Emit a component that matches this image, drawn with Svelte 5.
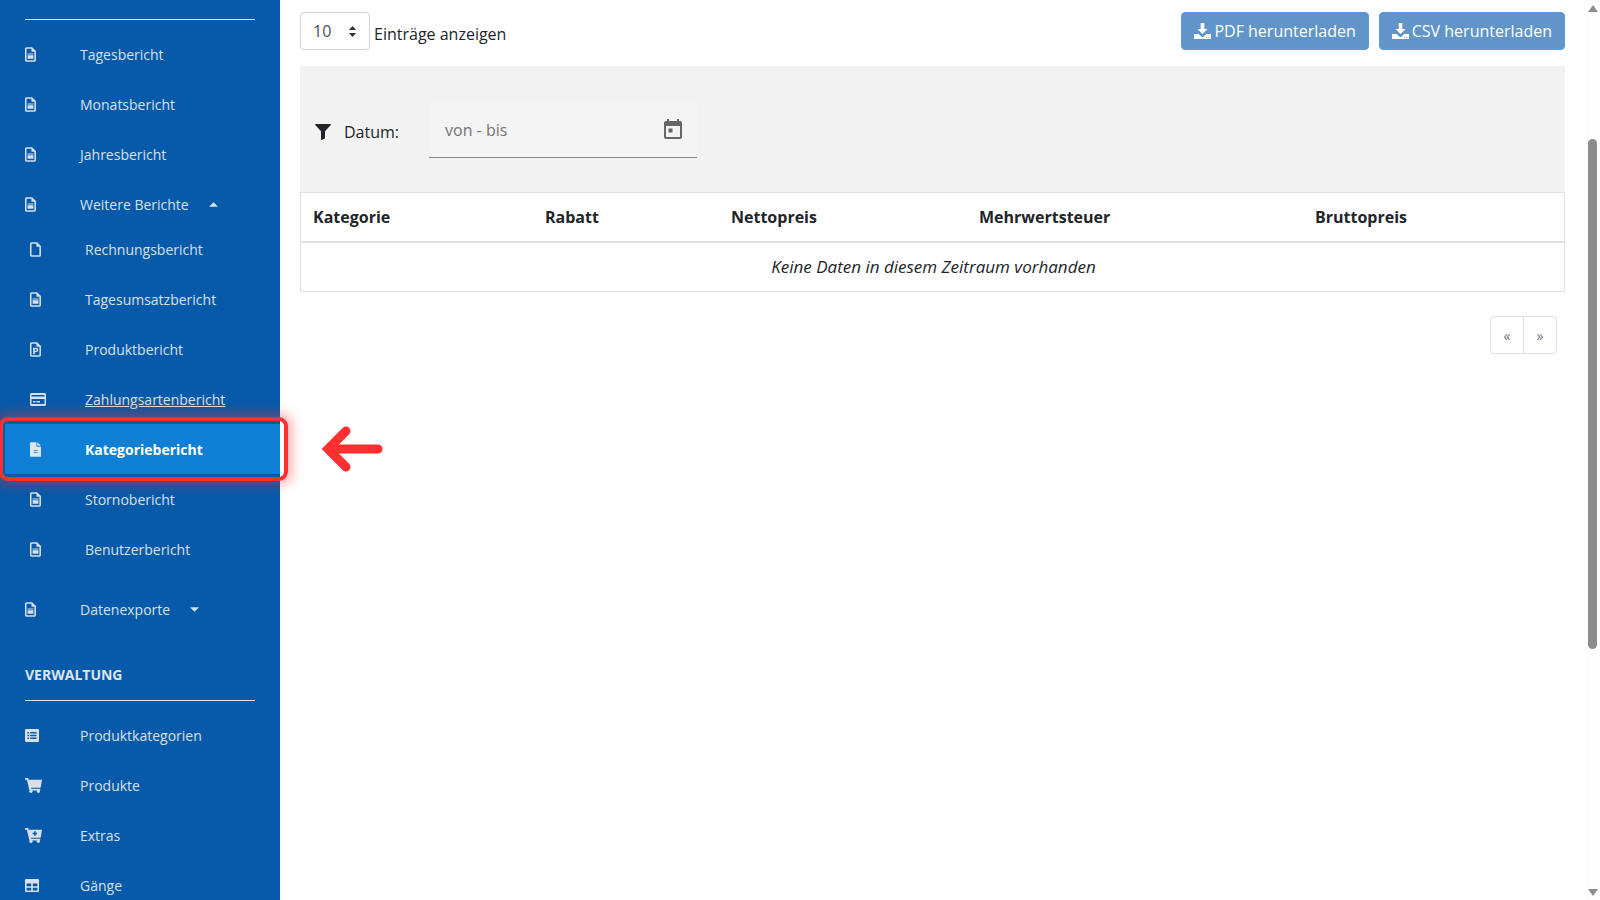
<script>
	const docPath = 'M1.5 0.9H7.4L11.1 4.6V14.4a.7.7 0 0 1-.7.7H1.5a.7.7 0 0 1-.7-.7V1.600a.7.7 0 0 1 .7-.7z';

	const top = [
		{ label: 'Tagesbericht', icon: 'doc' },
		{ label: 'Monatsbericht', icon: 'doc' },
		{ label: 'Jahresbericht', icon: 'doc' }
	];

	const sub = [
		{ label: 'Rechnungsbericht', icon: 'blank' },
		{ label: 'Tagesumsatzbericht', icon: 'doc' },
		{ label: 'Produktbericht', icon: 'p' },
		{ label: 'Zahlungsartenbericht', icon: 'card', underline: true },
		{ label: 'Kategoriebericht', icon: 'solid', active: true },
		{ label: 'Stornobericht', icon: 'doc' },
		{ label: 'Benutzerbericht', icon: 'doc' }
	];

	const admin = [
		{ label: 'Produktkategorien', icon: 'list' },
		{ label: 'Produkte', icon: 'cart' },
		{ label: 'Extras', icon: 'cartplus' },
		{ label: 'Gänge', icon: 'table' }
	];

	const columns = ['Kategorie', 'Rabatt', 'Nettopreis', 'Mehrwertsteuer', 'Bruttopreis'];
</script>

{#snippet icon(name)}
	{#if name === 'card'}
		<svg class="ico" width="16" height="13" viewBox="0 0 16 13">
			<path fill="currentColor" fill-rule="evenodd" d="M1.5 0h13A1.5 1.5 0 0 1 16 1.5v10a1.5 1.5 0 0 1-1.5 1.5h-13A1.5 1.5 0 0 1 0 11.5v-10A1.5 1.5 0 0 1 1.5 0zM1.500 2v1.500h13V2zM1.500 6v5h13V6zM3 8h2.500v1.500H3zM6.500 8H10v1.500H6.500z" />
		</svg>
	{:else if name === 'list'}
		<svg class="ico" width="14" height="13" viewBox="0 0 14 13">
			<path fill="currentColor" fill-rule="evenodd" d="M1.2 0h11.6A1.2 1.2 0 0 1 14 1.2v10.6a1.2 1.2 0 0 1-1.2 1.2H1.2A1.2 1.2 0 0 1 0 11.800V1.2A1.2 1.2 0 0 1 1.2 0zM2.500 3v1.600h1.600V3zM5.200 3v1.600h6.300V3zM2.500 5.700v1.600h1.600V5.700zM5.200 5.700v1.600h6.300V5.700zM2.500 8.400V10h1.600V8.400zM5.200 8.400V10h6.300V8.400z" />
		</svg>
	{:else if name === 'table'}
		<svg class="ico" width="14" height="13" viewBox="0 0 14 13">
			<path fill="currentColor" fill-rule="evenodd" d="M1.2 0h11.6A1.2 1.2 0 0 1 14 1.2v10.6a1.2 1.2 0 0 1-1.2 1.2H1.2A1.2 1.2 0 0 1 0 11.800V1.2A1.2 1.2 0 0 1 1.2 0zM1.600 4.500v2.800h4.600V4.500zM7.800 4.500v2.800h4.600V4.500zM1.600 8.700v2.700h4.600V8.700zM7.800 8.700v2.700h4.600V8.700z" />
		</svg>
	{:else if name === 'cart' || name === 'cartplus'}
		<svg class="ico" width="17" height="15" viewBox="0 0 16 14">
			<path fill="currentColor" d="M0 0h3l.4 1.500H16l-1.300 7.500H5.600l.2 1h8.500v1.600H4.200L1.800 1.500H0z" />
			<circle cx="5.600" cy="12.500" r="1.500" fill="currentColor" />
			<circle cx="12.600" cy="12.500" r="1.500" fill="currentColor" />
			{#if name === 'cartplus'}
				<path fill="#065aa9" d="M8.600 3h1.400v1.400h1.400v1.400H10v1.400H8.600V5.800H7.200V4.400h1.400z" />
			{/if}
		</svg>
	{:else if name === 'solid'}
		<svg class="ico" width="11" height="15" viewBox="0 0 12 16">
			<path fill="currentColor" fill-rule="evenodd" d="M1 0H7V4.500a.5.5 0 0 0 .5.5H12V15a1 1 0 0 1-1 1H1a1 1 0 0 1-1-1V1a1 1 0 0 1 1-1zM8 0l4 4H8zM4 8.500v.8h4.500v-.8zM4 10.800v.8h4.500v-.8z" />
		</svg>
	{:else}
		<svg class="ico" width="11" height="15" viewBox="0 0 12 16">
			<path fill="none" stroke="currentColor" stroke-width="1.700" d={docPath} />
			<path fill="currentColor" d="M7 .7V5h4.300z" />
			{#if name === 'doc'}
				<path fill="currentColor" d="M2.800 7h6.400v.9H2.800zM2.800 8.800h6.400v3.800H2.800z" />
			{:else if name === 'p'}
				<path fill="currentColor" fill-rule="evenodd" d="M3.400 6.200h3.300a2.200 2.200 0 0 1 0 4.700H5.200v2.200H3.400zM5.200 7.700v1.800h1.300a.9.9 0 0 0 0-1.800z" />
			{/if}
		</svg>
	{/if}
{/snippet}

{#snippet caret(up)}
	<svg class="caret" width="9" height="5" viewBox="0 0 10 5">
		<path fill="currentColor" d={up ? 'M5 0l5 5H0z' : 'M0 0h10L5 5z'} />
	</svg>
{/snippet}

{#snippet download()}
	<svg width="17" height="16" viewBox="0 0 17 16">
		<path fill="#fff" d="M6.700 0h3.600v6h3.200L8.500 11 3.500 6h3.200z" />
		<path fill="#fff" fill-rule="evenodd" d="M0 11h4.800l2.200 2.200a2 2 0 0 0 3 0L12.200 11H17v5H0zM12 14v.8h1.200V14zM14.200 14v.8h1.200V14z" />
	</svg>
{/snippet}

<div class="page">
	<aside class="sidebar">
		<hr class="rule" />
		{#each top as item}
			<div class="item"><span class="slot">{@render icon(item.icon)}</span>{item.label}</div>
		{/each}
		<div class="item"><span class="slot">{@render icon('doc')}</span>Weitere Berichte{@render caret(true)}</div>

		<div class="submenu">
			{#each sub as item}
				<div class="item sub" class:active={item.active}>
					<span class="slot">{@render icon(item.icon)}</span>
					<span class:underline={item.underline}>{item.label}</span>
					{#if item.active}
						<span class="frame"></span>
						<svg class="arrow" width="62" height="48" viewBox="0 0 62 48">
							<path fill="none" stroke="#ff3030" stroke-width="9" stroke-linecap="round" stroke-linejoin="miter" d="M57 24H7M25 6L7 24l18 18" />
						</svg>
					{/if}
				</div>
			{/each}
		</div>

		<div class="item export"><span class="slot">{@render icon('doc')}</span>Datenexporte{@render caret(false)}</div>

		<h3 class="heading">VERWALTUNG</h3>
		<hr class="rule lower" />
		{#each admin as item}
			<div class="item"><span class="slot">{@render icon(item.icon)}</span>{item.label}</div>
		{/each}
	</aside>

	<main class="content">
		<div class="toolbar">
			<div class="length">
				<div class="select">
					<span>10</span>
					<svg width="9" height="11" viewBox="0 0 8 11"><path fill="#333" d="M4 0l3.600 4H.4zM4 11L.4 7h7.200z" /></svg>
				</div>
				<span class="length-label">Einträge anzeigen</span>
			</div>
			<div class="actions">
				<button class="btn pdf">{@render download()}PDF herunterladen</button>
				<button class="btn">{@render download()}CSV herunterladen</button>
			</div>
		</div>

		<div class="filter">
			<svg width="16" height="16" viewBox="0 0 16 16">
				<path fill="#212529" d="M.6 0h14.800a.6.6 0 0 1 .4 1L10 7.200V14a.6.6 0 0 1-.3.5l-3 1.400a.5.5 0 0 1-.7-.5V7.200L.2 1A.6.6 0 0 1 .6 0z" />
			</svg>
			<span class="filter-label">Datum:</span>
			<div class="date">
				<span>von - bis</span>
				<svg class="calendar" width="18" height="20" viewBox="0 0 18 20">
					<path fill="#666" fill-rule="evenodd" d="M3 0h2v2h8V0h2v2h1a2 2 0 0 1 2 2v14a2 2 0 0 1-2 2H2a2 2 0 0 1-2-2V4a2 2 0 0 1 2-2h1zM2 7v11h14V7zM4.500 9.500h4v4h-4z" />
				</svg>
			</div>
		</div>

		<div class="table">
			<div class="thead">
				{#each columns as col}
					<div class="th">{col}</div>
				{/each}
			</div>
			<div class="empty">Keine Daten in diesem Zeitraum vorhanden</div>
		</div>

		<div class="pager">
			<span class="page-btn">«</span>
			<span class="page-btn">»</span>
		</div>
	</main>

	<div class="scrollbar">
		<span class="tri up"></span>
		<span class="thumb"></span>
		<span class="tri down"></span>
	</div>
</div>

<style>
	:global(body) {
		margin: 0;
		overflow: hidden;
		background: #fff;
	}

	.page {
		display: flex;
		height: 900px;
		overflow: hidden;
		font-family: 'Open Sans', sans-serif;
		color: #212529;
	}

	.sidebar {
		width: 280px;
		flex: none;
		box-sizing: border-box;
		padding-top: 19px;
		background: #065aa9;
		color: #d9e0e8;
		font-size: 14px;
	}

	.rule {
		margin: 0 25px 9px;
		height: 1px;
		border: 0;
		background: #dfe6ee;
	}

	.item {
		position: relative;
		display: flex;
		align-items: center;
		height: 50px;
		padding-left: 25px;
	}

	.slot {
		display: flex;
		width: 55px;
		flex: none;
	}

	.caret {
		margin-left: 20px;
	}

	.submenu {
		margin-top: -5px;
	}

	.sub {
		padding-left: 30px;
	}

	.underline {
		text-decoration: underline;
	}

	.active {
		margin-left: 5px;
		padding-left: 25px;
		background: #0f7fd6;
		color: #fff;
		font-weight: 700;
	}

	.active .slot {
		color: #dfe6ee;
	}

	.frame {
		position: absolute;
		left: -6px;
		right: -8px;
		top: -7px;
		bottom: -7px;
		box-sizing: border-box;
		border: 4px solid #ff3030;
		border-radius: 9px;
		box-shadow: 0 0 12px 4px rgba(255, 48, 48, 0.4);
	}

	.arrow {
		position: absolute;
		left: 316px;
		top: 1px;
	}

	.export {
		margin-top: 10px;
	}

	.heading {
		margin: 0;
		padding: 31px 25px 0;
		font-size: 14px;
		line-height: 20px;
		font-weight: 700;
		color: #dfe4ea;
	}

	.lower {
		margin-top: 15px;
		margin-bottom: 9px;
	}

	.content {
		flex: 1;
		min-width: 0;
		padding: 12px 20px 0;
	}

	.toolbar {
		display: flex;
		justify-content: space-between;
		height: 38px;
	}

	.length {
		display: flex;
		align-items: flex-start;
		gap: 4px;
	}

	.select {
		display: flex;
		align-items: center;
		justify-content: space-between;
		box-sizing: border-box;
		width: 70px;
		height: 38px;
		padding: 0 12px;
		border: 1px solid #ced4da;
		border-radius: 4px;
		font-size: 16px;
		color: #495057;
	}

	.length-label {
		font-size: 16px;
		line-height: 22px;
		margin-top: 11px;
	}

	.actions {
		display: flex;
		gap: 10px;
	}

	.btn {
		display: flex;
		align-items: center;
		gap: 3px;
		height: 38px;
		padding: 0 12px;
		border: 1px solid #5b9ade;
		border-radius: 4px;
		background: #6195c9;
		color: #fff;
		font-family: inherit;
		font-size: 16px;
	}

	.filter {
		display: flex;
		align-items: center;
		box-sizing: border-box;
		height: 126px;
		margin-top: 16px;
		padding: 6px 0 0 15px;
		background: #f2f2f2;
	}

	.filter-label {
		margin-left: 13px;
		font-size: 16px;
	}

	.date {
		display: flex;
		align-items: center;
		justify-content: space-between;
		box-sizing: border-box;
		width: 268px;
		height: 56px;
		margin: 0 0 4px 30px;
		padding: 0 15px 0 16px;
		border-bottom: 1px solid #888;
		background: #f4f4f4;
		font-size: 16px;
		color: #757575;
	}

	.calendar {
		margin-bottom: 2px;
	}

	.table {
		border: 1px solid #dee2e6;
	}

	.thead {
		display: grid;
		grid-template-columns: 232px 186px 248px 336px 1fr;
		height: 48px;
		align-items: center;
		border-bottom: 2px solid #dee2e6;
	}

	.th {
		padding-left: 12px;
		font-size: 16px;
		font-weight: 700;
	}

	.empty {
		height: 48px;
		padding-left: 2px;
		line-height: 48px;
		text-align: center;
		font-size: 17px;
		font-style: italic;
	}

	.pager {
		display: flex;
		justify-content: flex-end;
		margin: 24px 8px 0 0;
	}

	.page-btn {
		display: flex;
		align-items: center;
		justify-content: center;
		width: 34px;
		height: 38px;
		box-sizing: border-box;
		border: 1px solid #dee2e6;
		font-size: 14px;
		color: #6c757d;
	}

	.page-btn:first-child {
		border-radius: 4px 0 0 4px;
	}

	.page-btn:last-child {
		margin-left: -1px;
		border-radius: 0 4px 4px 0;
	}

	.scrollbar {
		display: flex;
		flex-direction: column;
		align-items: center;
		width: 15px;
		flex: none;
		background: #fdfdfd;
	}

	.tri {
		width: 0;
		height: 0;
		border-left: 5px solid transparent;
		border-right: 5px solid transparent;
	}

	.tri.up {
		margin-top: 5px;
		border-bottom: 7px solid #8c8c8c;
	}

	.tri.down {
		margin-top: 240px;
		border-top: 7px solid #8c8c8c;
	}

	.thumb {
		width: 9px;
		height: 510px;
		margin-top: 127px;
		border-radius: 5px;
		background: #8c8c8c;
	}
</style>
